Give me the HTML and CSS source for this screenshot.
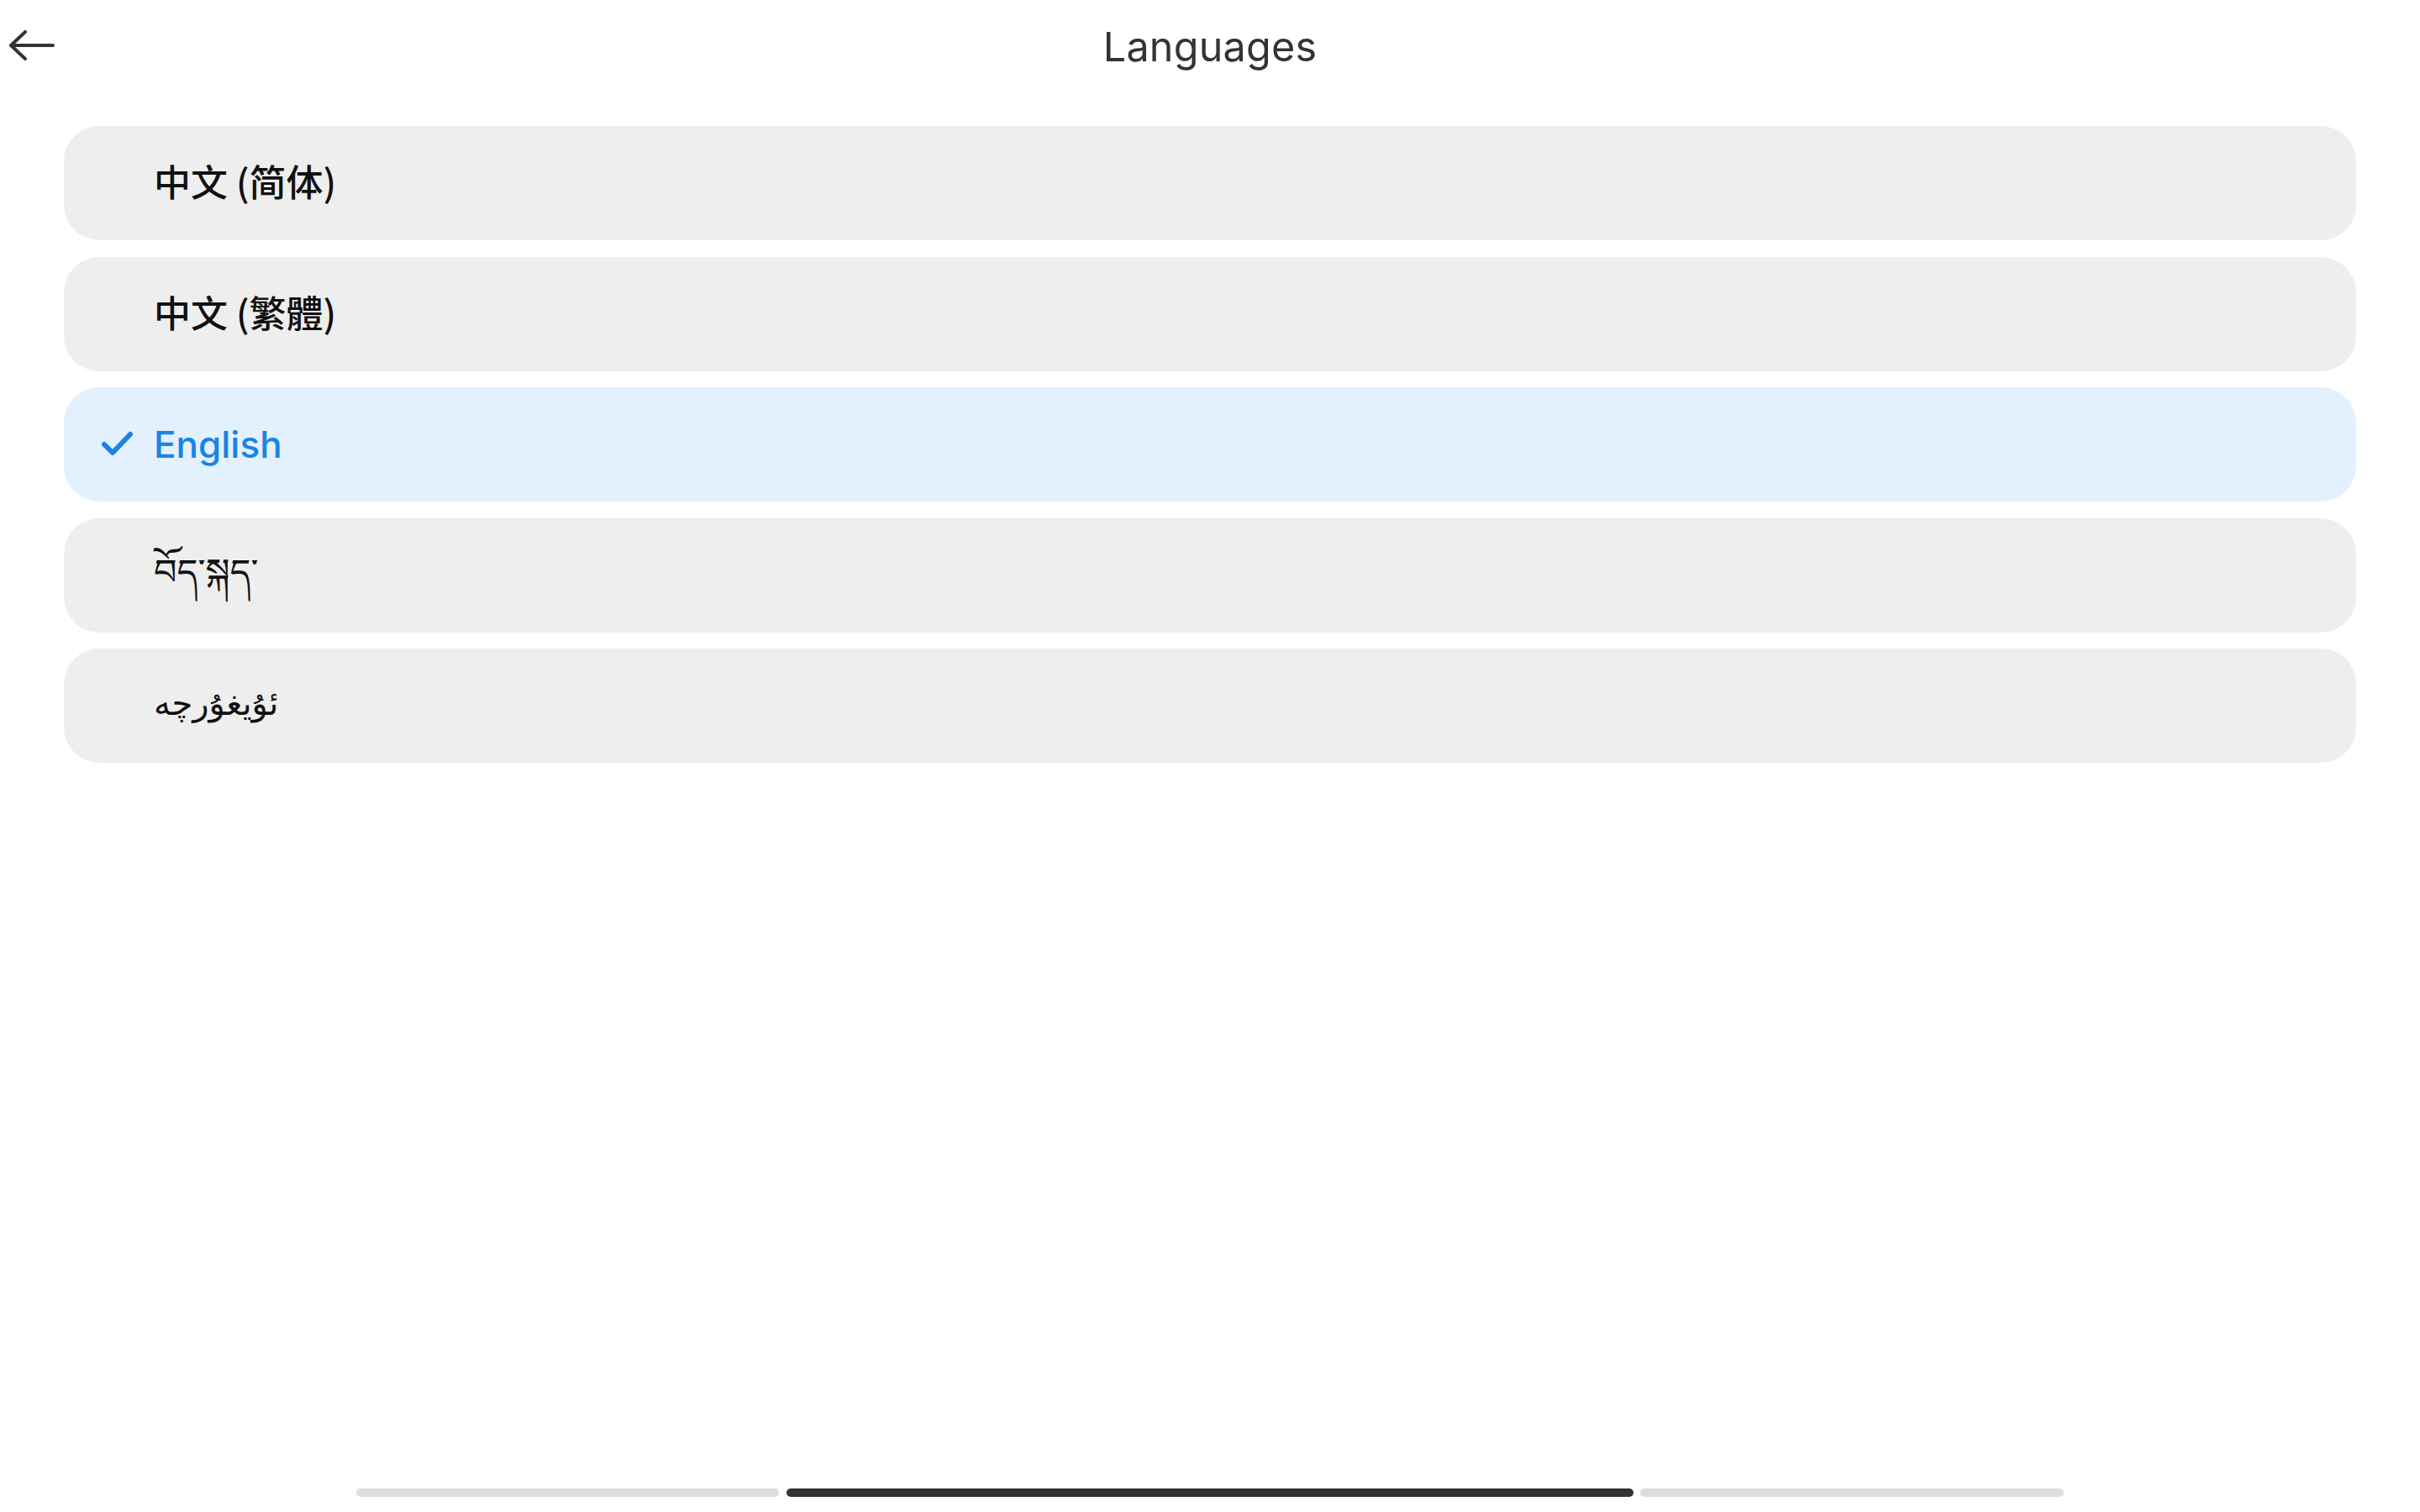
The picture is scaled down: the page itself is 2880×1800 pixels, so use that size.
FILE: index.html
```html
<!DOCTYPE html>
<html lang="en">
<head>
  <meta charset="UTF-8" />
  <meta name="viewport" content="width=device-width, initial-scale=1.0"/>
  <title>Languages</title>
  <link rel="stylesheet" href="styles.css">
</head>
<body>

  <header class="topbar">
    <button class="back" aria-label="Back">
      <svg width="56" height="40" viewBox="0 0 56 40">
        <path d="M3 18 H53 M3 18 L20 2 M3 18 L20 34" fill="none" stroke="#333" stroke-width="4" stroke-linecap="round" stroke-linejoin="round"/>
      </svg>
    </button>
    <h1 class="title">Languages</h1>
  </header>

  <ul class="lang-list">
    <li class="lang-item"><span class="check"></span><span class="name cjk" lang="zh-CN">中文 (简体)</span></li>
    <li class="lang-item"><span class="check"></span><span class="name cjk" lang="zh-TW">中文 (繁體)</span></li>
    <li class="lang-item selected">
      <span class="check">
        <svg width="40" height="34" viewBox="0 0 40 34">
          <path d="M4 17 L14 27 L35 5" fill="none" stroke="#1a84e5" stroke-width="6" stroke-linecap="round" stroke-linejoin="round"/>
        </svg>
      </span>
      <span class="name">English</span>
    </li>
    <li class="lang-item"><span class="check"></span><span class="name tibetan" lang="bo">བོད་སྐད་</span></li>
    <li class="lang-item"><span class="check"></span><span class="name uyghur" lang="ug" dir="rtl">ئۇيغۇرچە</span></li>
  </ul>

  <div class="pager">
    <span class="pager-seg"></span>
    <span class="pager-seg active"></span>
    <span class="pager-seg last"></span>
  </div>

</body>
</html>
```

FILE: styles.css
```css
:root {
  --bg: #ffffff;
  --row-bg: #eeeeee;
  --row-selected: #e3f1fe;
  --text: #111111;
  --title: #333333;
  --accent: #1a84e5;
}

* {
  box-sizing: border-box;
}

body {
  margin: 0;
  min-height: 100vh;
  display: flex;
  flex-direction: column;
  background: var(--bg);
  color: var(--text);
  font-family: Inter, "Noto Sans", "Noto Sans CJK SC", sans-serif;
}

.topbar {
  position: relative;
  height: 110px;
  display: flex;
  align-items: center;
  justify-content: center;
}

.back {
  position: absolute;
  left: 10px;
  top: 36px;
  padding: 0;
  border: none;
  background: none;
  cursor: pointer;
  line-height: 0;
}

.title {
  margin: 0;
  font-size: 48.5px;
  font-weight: 400;
  color: var(--title);
  letter-spacing: 0.2px;
}

.lang-list {
  list-style: none;
  margin: 40px 0 0;
  padding: 0 76px;
  display: flex;
  flex-direction: column;
  gap: 19.5px;
}

.lang-item {
  height: 136px;
  display: flex;
  align-items: center;
  padding-left: 44px;
  background: var(--row-bg);
  border-radius: 42px;
}

.lang-item.selected {
  background: var(--row-selected);
  color: var(--accent);
}

.check {
  width: 63px;
  display: flex;
  align-items: center;
  line-height: 0;
}

.name {
  font-size: 44px;
  font-weight: 500;
}

.cjk {
  font-family: "Noto Sans CJK SC", sans-serif;
  padding-bottom: 6px;
}

.cjk:lang(zh-TW) {
  font-family: "Noto Sans CJK TC", sans-serif;
}

.tibetan {
  font-family: "Noto Sans Tibetan", "Noto Serif Tibetan", "Jomolhari", serif;
  font-weight: 400;
  font-size: 43px;
  padding-top: 18px;
}

.uyghur {
  font-family: "DejaVu Sans", "Noto Sans Arabic", sans-serif;
  font-weight: 400;
  font-size: 40px;
  padding-bottom: 6px;
}

.pager {
  margin-top: auto;
  margin-bottom: 18px;
  display: flex;
  justify-content: center;
}

.pager-seg {
  height: 10px;
  width: 503px;
  border-radius: 5px;
  background: #dddddd;
}

.pager-seg.active {
  width: 1008px;
  margin: 0 8px 0 9px;
  background: #333333;
}

.pager-seg.last {
  width: 504px;
}
```
